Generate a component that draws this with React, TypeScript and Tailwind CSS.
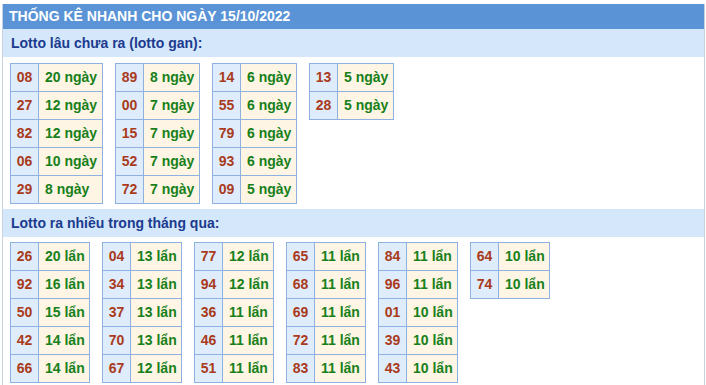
const ganTables: [string, string][][] = [
  [
    ['08', '20 ngày'],
    ['27', '12 ngày'],
    ['82', '12 ngày'],
    ['06', '10 ngày'],
    ['29', '8 ngày'],
  ],
  [
    ['89', '8 ngày'],
    ['00', '7 ngày'],
    ['15', '7 ngày'],
    ['52', '7 ngày'],
    ['72', '7 ngày'],
  ],
  [
    ['14', '6 ngày'],
    ['55', '6 ngày'],
    ['79', '6 ngày'],
    ['93', '6 ngày'],
    ['09', '5 ngày'],
  ],
  [
    ['13', '5 ngày'],
    ['28', '5 ngày'],
  ],
]

const hotTables: [string, string][][] = [
  [
    ['26', '20 lẩn'],
    ['92', '16 lẩn'],
    ['50', '15 lẩn'],
    ['42', '14 lẩn'],
    ['66', '14 lẩn'],
  ],
  [
    ['04', '13 lẩn'],
    ['34', '13 lẩn'],
    ['37', '13 lẩn'],
    ['70', '13 lẩn'],
    ['67', '12 lẩn'],
  ],
  [
    ['77', '12 lẩn'],
    ['94', '12 lẩn'],
    ['36', '11 lẩn'],
    ['46', '11 lẩn'],
    ['51', '11 lẩn'],
  ],
  [
    ['65', '11 lẩn'],
    ['68', '11 lẩn'],
    ['69', '11 lẩn'],
    ['72', '11 lẩn'],
    ['83', '11 lẩn'],
  ],
  [
    ['84', '11 lẩn'],
    ['96', '11 lẩn'],
    ['01', '10 lẩn'],
    ['39', '10 lẩn'],
    ['43', '10 lẩn'],
  ],
  [
    ['64', '10 lẩn'],
    ['74', '10 lẩn'],
  ],
]

function StatTable({ rows, className }: { rows: [string, string][]; className: string }) {
  return (
    <table className={`table-fixed border-collapse border border-[#8eb1e2] ${className}`}>
      <tbody>
        {rows.map(([num, value]) => (
          <tr key={num} className="h-[28px]">
            <td className="w-[28px] border border-[#8eb1e2] bg-[#dfecfc] p-0 text-center text-[14px] font-bold text-[#a93b1c]">
              {num}
            </td>
            <td className="border border-[#8eb1e2] bg-[#fff5e4] py-0 pl-[6px] text-[14px] font-bold whitespace-nowrap text-[#17801a]">
              {value}
            </td>
          </tr>
        ))}
      </tbody>
    </table>
  )
}

function App() {
  return (
    <div className="h-[385px] w-[706px] bg-white pt-[4px] font-['Liberation_Sans',Arial,sans-serif]">
      <div className="ml-[2px] w-[703px] border-x border-[#c8d3df]">
        <div className="flex h-[25px] items-center bg-[#5a94d6] pl-[6px] text-[14px] font-bold text-white">
          THỐNG KÊ NHANH CHO NGÀY 15/10/2022
        </div>

        <div className="flex h-[28px] items-center bg-[#d4e7fb] pl-[8px] text-[14px] font-bold text-[#1b3b8e]">
          Lotto lâu chưa ra (lotto gan):
        </div>
        <div className="flex items-start gap-[12px] px-[7px] pt-[6px] pb-[5px]">
          {ganTables.map((rows, i) => (
            <StatTable key={i} rows={rows} className={i === 0 ? 'w-[93px]' : 'w-[85px]'} />
          ))}
        </div>

        <div className="flex h-[28px] items-center bg-[#d4e7fb] pl-[8px] text-[14px] font-bold text-[#1b3b8e]">
          Lotto ra nhiều trong tháng qua:
        </div>
        <div className="flex items-start gap-[12px] px-[7px] pt-[5px] pb-[5px]">
          {hotTables.map((rows, i) => (
            <StatTable key={i} rows={rows} className="w-[80px]" />
          ))}
        </div>
      </div>
    </div>
  )
}

export default App
